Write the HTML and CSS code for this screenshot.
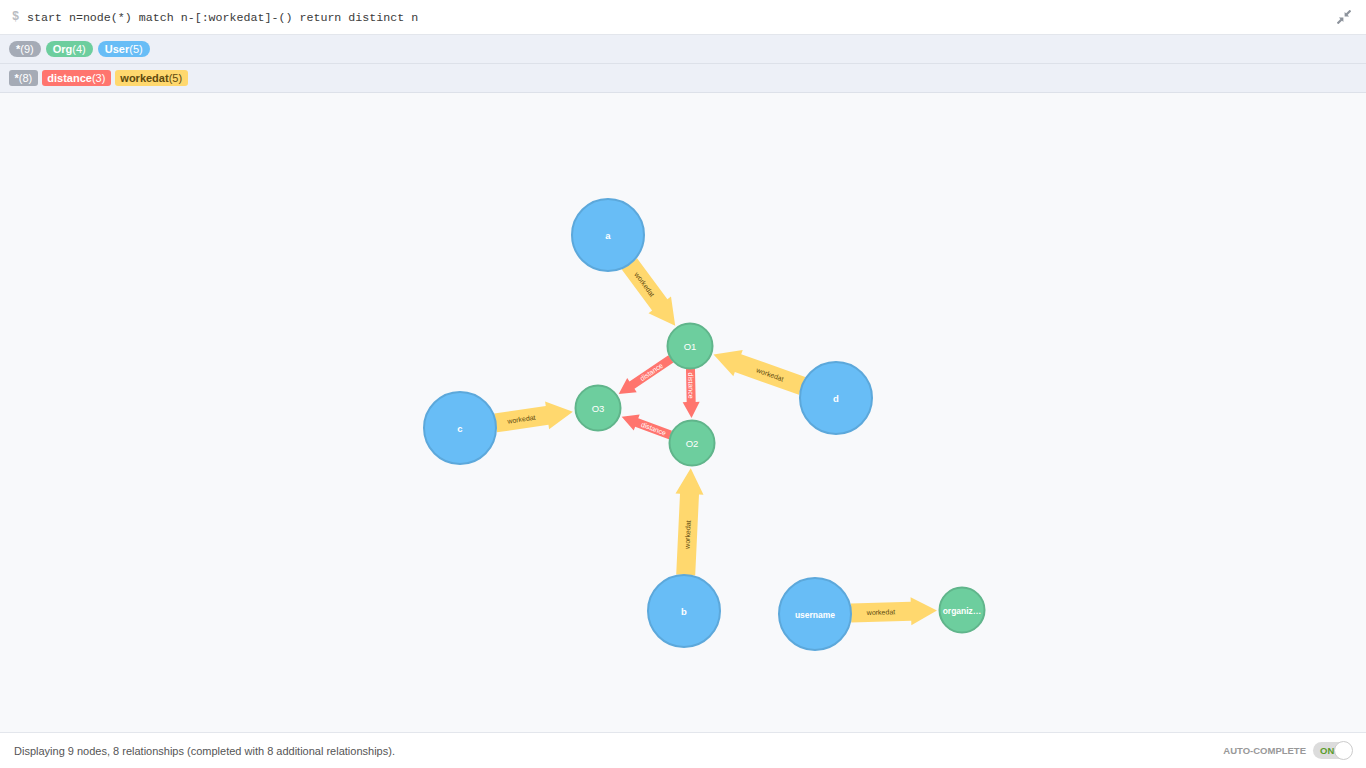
FILE: index.html
```html
<!DOCTYPE html>
<html>
<head>
<meta charset="utf-8">
<link rel="stylesheet" href="styles.css">
</head>
<body>
<div class="app">
  <div class="topbar">
    <span class="prompt">$</span>
    <span class="query">start n=node(*) match n-[:workedat]-() return distinct n</span>
    <svg class="shrink" width="14" height="14" viewBox="0 0 14 14">
      <path d="M13.5 0.5 L9.2 4.8" stroke="#8d939c" stroke-width="2.2" fill="none"/>
      <polygon points="7.6,1.9 7.6,6.4 12.1,6.4" fill="#8d939c"/>
      <path d="M0.5 13.5 L4.8 9.2" stroke="#8d939c" stroke-width="2.2" fill="none"/>
      <polygon points="1.9,7.6 6.4,7.6 6.4,12.1" fill="#8d939c"/>
    </svg>
  </div>
  <div class="legend">
    <span class="pill round grey"><b>*</b>(9)</span>
    <span class="pill round green"><b>Org</b>(4)</span>
    <span class="pill round blue"><b>User</b>(5)</span>
  </div>
  <div class="legend rels">
    <span class="pill grey"><b>*</b>(8)</span>
    <span class="pill red"><b>distance</b>(3)</span>
    <span class="pill yellow"><b>workedat</b>(5)</span>
  </div>
  <div class="canvas">
    <svg class="graph" width="1366" height="639" viewBox="0 0 1366 639">
      <g transform="translate(0,-93)">
        <!-- workedat edges -->
        <g class="rel wk" transform="translate(608,235) rotate(53.5)">
          <polygon points="36,-9.5 87,-9.5 87,-14 113,0 87,14 87,9.5 36,9.5"/>
          <text x="61.5" y="2.5">workedat</text>
        </g>
        <g class="rel wk" transform="translate(836,398) rotate(199.6)">
          <polygon points="36,-9.5 104,-9.5 104,-14 130,0 104,14 104,9.5 36,9.5"/>
          <text x="70" y="2.5" transform="rotate(180 70 0)">workedat</text>
        </g>
        <g class="rel wk" transform="translate(460,428) rotate(-8.2)">
          <polygon points="36,-9.5 88,-9.5 88,-14 114,0 88,14 88,9.5 36,9.5"/>
          <text x="62" y="2.5">workedat</text>
        </g>
        <g class="rel wk" transform="translate(684,611) rotate(-87.3)">
          <polygon points="36,-9.5 117,-9.5 117,-14 143,0 117,14 117,9.5 36,9.5"/>
          <text x="76.5" y="2.5">workedat</text>
        </g>
        <g class="rel wk" transform="translate(815,614) rotate(-1.6)">
          <polygon points="36,-9.5 96,-9.5 96,-14 122,0 96,14 96,9.5 36,9.5"/>
          <text x="66" y="2.5">workedat</text>
        </g>
        <!-- distance edges -->
        <g class="rel ds" transform="translate(690,346) rotate(146)">
          <polygon points="23,-4.5 70,-4.5 70,-8.5 86,0 70,8.5 70,4.5 23,4.5"/>
          <text x="46.5" y="2.4" transform="rotate(180 46.5 0)">distance</text>
        </g>
        <g class="rel ds" transform="translate(690,346) rotate(88.8)">
          <polygon points="23,-4.5 56,-4.5 56,-8.5 72,0 56,8.5 56,4.5 23,4.5"/>
          <text x="39.5" y="2.4">distance</text>
        </g>
        <g class="rel ds" transform="translate(692,443) rotate(200.4)">
          <polygon points="23,-4.5 59,-4.5 59,-8.5 75,0 59,8.5 59,4.5 23,4.5"/>
          <text x="41" y="2.4" transform="rotate(180 41 0)">distance</text>
        </g>
        <!-- nodes -->
        <g class="node user"><circle cx="608" cy="235" r="36"/><text x="608" y="238.5">a</text></g>
        <g class="node user"><circle cx="460" cy="428" r="36"/><text x="460" y="431.5">c</text></g>
        <g class="node user"><circle cx="836" cy="398" r="36"/><text x="836" y="401.5">d</text></g>
        <g class="node user"><circle cx="684" cy="611" r="36"/><text x="684" y="614.5">b</text></g>
        <g class="node user"><circle cx="815" cy="614" r="36"/><text class="long" x="815" y="617.5">username</text></g>
        <g class="node org"><circle cx="690" cy="346" r="22.5"/><text x="690" y="349.5">O1</text></g>
        <g class="node org"><circle cx="598" cy="408" r="22.5"/><text x="598" y="411.5">O3</text></g>
        <g class="node org"><circle cx="692" cy="443" r="22.5"/><text x="692" y="446.5">O2</text></g>
        <g class="node org"><circle cx="962" cy="610" r="22.5"/><text class="long" x="962" y="613.5">organiz…</text></g>
      </g>
    </svg>
  </div>
  <div class="footer">
    <span class="status">Displaying 9 nodes, 8 relationships (completed with 8 additional relationships).</span>
    <div class="auto">
      <span class="auto-label">AUTO-COMPLETE</span>
      <span class="toggle"><span class="on">ON</span><span class="knob"></span></span>
    </div>
  </div>
</div>
</body>
</html>
```
FILE: styles.css
```css
* { box-sizing: border-box; }
html, body { margin: 0; padding: 0; }
body {
  font-family: "Liberation Sans", Arial, sans-serif;
  background: #f8f9fb;
  width: 1366px;
  height: 768px;
  overflow: hidden;
}
.app {
  display: flex;
  flex-direction: column;
  height: 768px;
}
.topbar {
  height: 35px;
  flex: none;
  background: #fff;
  border-bottom: 1px solid #e3e6ec;
  display: flex;
  align-items: center;
  padding: 0 15px 0 12px;
}
.prompt {
  color: #b9bcc2;
  font-family: "Liberation Mono", monospace;
  font-size: 12px;
  font-weight: bold;
  width: 15px;
}
.query {
  font-family: "Liberation Mono", monospace;
  font-size: 11.65px;
  color: #3a3a3a;
  flex: 1;
}
.shrink { display: block; }
.legend {
  height: 29px;
  flex: none;
  background: #edf0f7;
  border-bottom: 1px solid #dde1e9;
  display: flex;
  align-items: center;
  gap: 5px;
  padding: 0 9px;
}
.legend.rels { gap: 4px; }
.pill {
  display: inline-block;
  height: 16px;
  line-height: 16px;
  font-size: 11px;
  color: #fff;
  padding: 0 5.5px;
  border-radius: 3px;
}
.pill.round { border-radius: 8px; padding: 0 7px; }
.pill b { font-weight: bold; }
.grey { background: #a5abb6; }
.green { background: #6dce9e; }
.blue { background: #68bdf6; }
.red { background: #ff756e; }
.yellow { background: #ffd86e; color: #604a0e; }
.canvas {
  flex: 1;
  background: #f8f9fb;
  overflow: hidden;
}
.graph { display: block; }
.rel text {
  font-family: "Liberation Sans", Arial, sans-serif;
  font-size: 7px;
  text-anchor: middle;
}
.wk polygon { fill: #ffd86e; }
.wk text { fill: #604a0e; }
.ds polygon { fill: #ff756e; }
.ds text { fill: #fff; }
.node text {
  font-family: "Liberation Sans", Arial, sans-serif;
  font-size: 9.5px;
  fill: #fff;
  text-anchor: middle;
}
.user circle { fill: #68bdf6; stroke: #5ca8db; stroke-width: 2; }
.org circle { fill: #6dce9e; stroke: #60b58b; stroke-width: 2; }
.user text { font-weight: bold; }
.node text.long { font-weight: bold; font-size: 8.5px; }
.footer {
  height: 36px;
  flex: none;
  background: #fff;
  border-top: 1px solid #e3e6ec;
  display: flex;
  align-items: center;
  justify-content: space-between;
  padding: 0 14px 0 14px;
}
.status {
  font-size: 11px;
  color: #555;
}
.auto {
  display: flex;
  align-items: center;
  gap: 7px;
}
.auto-label {
  font-size: 9.5px;
  font-weight: bold;
  color: #999;
}
.toggle {
  position: relative;
  width: 39px;
  height: 17px;
  border-radius: 9px;
  background: #dcdcdc;
  display: block;
}
.toggle .on {
  position: absolute;
  left: 7px;
  top: 0;
  line-height: 17px;
  font-size: 9.5px;
  font-weight: bold;
  color: #5b9c2b;
}
.toggle .knob {
  position: absolute;
  right: -1px;
  top: -1px;
  width: 19px;
  height: 19px;
  border-radius: 50%;
  background: #fff;
  border: 1px solid #ccc;
}
```
